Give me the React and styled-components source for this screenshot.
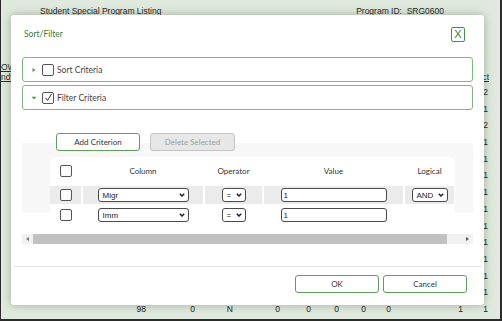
import React from 'react';
import styled, { createGlobalStyle } from 'styled-components';

const Global = createGlobalStyle`
  html, body { margin: 0; padding: 0; background: #fff; }
  body { font-family: Lato, "Liberation Sans", sans-serif; }
`;

const Screen = styled.div`
  position: relative;
  width: 502px;
  height: 321px;
  box-sizing: border-box;
  background: #dfe9dd;
  border-left: 1px solid #2b2b2b;
  border-right: 2px solid #2b2b2b;
  border-bottom: 2px solid #2b2b2b;
  overflow: hidden;
  font-family: "Liberation Sans", Arial, sans-serif;
  color: #2a2a2a;
`;

/* ---------- background page ---------- */
const PageHeader = styled.div`
  height: 15px;
  display: flex;
  justify-content: space-between;
  align-items: flex-start;
  padding: 6px 56px 0 39px;
  box-sizing: border-box;
  font-size: 8.5px;
  white-space: pre;
  color: #1f1f1f;
`;

const cols = '14px 135px 49px 38px 47px 31px 28px 27px 25px 72px 25px';

const BgHead = styled.div`
  display: grid;
  grid-template-columns: ${cols};
  height: 69px;
  align-items: end;
  font-size: 8.5px;
  padding-bottom: 2px;
  box-sizing: border-box;
`;

const BgGrid = styled.div`
  display: grid;
  grid-template-columns: ${cols};
  grid-auto-rows: 16.7px;
  font-size: 8.5px;
`;

const HeadCell = styled.div`
  grid-column: ${p => p.$col};
  text-align: right;
  padding-right: 3px;
  line-height: 10px;
  text-decoration: underline;
  overflow: hidden;
  white-space: pre;
`;

const BgCell = styled.div`
  text-align: right;
  padding-right: 4px;
  line-height: 16.7px;
  white-space: nowrap;
  color: #222;
`;

/* ---------- modal ---------- */
const Modal = styled.div`
  position: absolute;
  left: 10px;
  top: 15px;
  width: 473px;
  height: 290px;
  background: #fff;
  border-radius: 3px;
  box-shadow: 0 0 9px rgba(40, 60, 40, 0.35);
  display: flex;
  flex-direction: column;
  font-family: Lato, "Liberation Sans", sans-serif;
`;

const ModalHeader = styled.div`
  height: 38px;
  display: flex;
  align-items: center;
  justify-content: space-between;
  padding: 0 19px 0 13px;
`;

const Title = styled.div`
  font-size: 8.5px;
  color: #3a7a3a;
`;

const CloseButton = styled.button`
  width: 14px;
  height: 15px;
  padding: 0;
  border: 1px solid #4b8b4b;
  border-radius: 2px;
  background: #fff;
  color: #3a7a3a;
  font-family: "Liberation Sans", Arial, sans-serif;
  font-size: 11px;
  line-height: 13px;
  display: flex;
  align-items: center;
  justify-content: center;
`;

const Panels = styled.div`
  display: flex;
  flex-direction: column;
  gap: 3px;
  margin: 4px 11px 0;
`;

const Panel = styled.div`
  height: 25px;
  box-sizing: border-box;
  border: 1px solid #86b386;
  border-radius: 3px;
  display: flex;
  align-items: center;
  padding-left: 8px;
`;

const Arrow = styled.svg`
  width: 6px;
  height: 6px;
  margin-right: 5px;
`;

const Box = styled.span`
  width: 12px;
  height: 12px;
  box-sizing: border-box;
  border: 1.2px solid #555;
  border-radius: 2px;
  background: #fff;
  display: inline-flex;
  align-items: center;
  justify-content: center;
  flex-shrink: 0;
`;

const PanelLabel = styled.span`
  margin-left: 3px;
  font-size: 8.5px;
  color: #444;
`;

const Toolbar = styled.div`
  position: relative;
  z-index: 1;
  display: flex;
  gap: 10px;
  margin: 23px 0 0 45px;
`;

const ActionButton = styled.button`
  width: ${p => p.$w}px;
  height: 18px;
  box-sizing: border-box;
  border-radius: 3px;
  border: 1px solid ${p => (p.$disabled ? '#c4c4c4' : '#5f9d5f')};
  background: ${p => (p.$disabled ? '#e7e7e7' : '#fff')};
  color: ${p => (p.$disabled ? '#a0a0a0' : '#333')};
  font-family: Lato, "Liberation Sans", sans-serif;
  font-size: 8px;
  padding: 0;
`;

const GridWrap = styled.div`
  margin: -8px 11px 0;
  height: 70px;
  background: #f7f7f7;
  padding: 14px 0 0 28px;
  box-sizing: border-box;
`;

const TableCard = styled.div`
  width: 405px;
  background: #fff;
  border-radius: 6px 6px 0 0;
  display: grid;
  grid-template-columns: 31px 120px 57px 139px 49px;
  grid-template-rows: 27px 18px 18px;
  gap: 2px;
`;

const Cell = styled.div`
  background: ${p => (p.$shaded ? '#ebebeb' : 'transparent')};
  display: flex;
  align-items: center;
  justify-content: center;
  font-size: 8px;
  color: #333;
`;

const Select = styled.div`
  width: ${p => p.$w}px;
  height: 14px;
  box-sizing: border-box;
  border: 1px solid #4a4a4a;
  border-radius: 3px;
  background: #fff;
  display: flex;
  align-items: center;
  justify-content: space-between;
  padding: 0 3px 0 4px;
  font-family: "Liberation Sans", Arial, sans-serif;
  font-size: 8px;
  color: #222;
`;

const Input = styled.div`
  width: ${p => p.$w}px;
  height: 14px;
  box-sizing: border-box;
  border: 1px solid #4a4a4a;
  border-radius: 3px;
  background: #fff;
  display: flex;
  align-items: center;
  padding-left: 2px;
  font-family: "Liberation Sans", Arial, sans-serif;
  font-size: 8px;
  color: #222;
`;

const Scrollbar = styled.div`
  margin: 21px 11px 0;
  height: 10px;
  background: #f1f1f1;
  display: flex;
  align-items: stretch;
`;

const ScrollButton = styled.div`
  width: 11px;
  display: flex;
  align-items: center;
  justify-content: center;
`;

const Thumb = styled.div`
  width: 414px;
  background: #c1c1c1;
`;

const Track = styled.div`
  flex: 1;
`;

const Divider = styled.div`
  margin: 22px 2px 0;
  height: 1px;
  background: #e1e5ea;
`;

const Footer = styled.div`
  display: flex;
  justify-content: flex-end;
  gap: 4px;
  padding: 8px 17px 0 0;
`;

const Chevron = () => (
  <svg width="6" height="4" viewBox="0 0 6 4">
    <polyline points="0.8,0.8 3,3 5.2,0.8" fill="none" stroke="#222" strokeWidth="1.5" />
  </svg>
);

const Check = () => (
  <svg width="9" height="9" viewBox="0 0 9 9">
    <polyline points="1.5,4.8 3.6,7.4 7.6,0.8" fill="none" stroke="#333" strokeWidth="1" />
  </svg>
);

const rightCol = ['2', '1', '2', '1', '1', '1', '1', '1', '1', '1', '1', '1', '1'];

export default function App() {
  // rows hidden behind the dialog only show their last column
  const rows = rightCol.map(v => ['', '', '', '', '', '', '', '', '', '', v]);
  rows.push(['', '98', '0', 'N', '0', '0', '0', '0', '0', '1', '1']);

  return (
    <>
      <Global />
      <Screen>
        <PageHeader>
          <span>Student Special Program Listing</span>
          <span>Program ID:  SRG0600</span>
        </PageHeader>
        <BgHead>
          <HeadCell $col={1}>{'OW\nndv'}</HeadCell>
          <HeadCell $col={11}>ct</HeadCell>
        </BgHead>
        <BgGrid>
          {rows.map((r, i) => r.map((c, j) => <BgCell key={`${i}-${j}`}>{c}</BgCell>))}
        </BgGrid>

        <Modal>
          <ModalHeader>
            <Title>Sort/Filter</Title>
            <CloseButton>X</CloseButton>
          </ModalHeader>
          <Panels>
            <Panel>
              <Arrow viewBox="0 0 6 6">
                <polygon points="1.5,1 4.5,3 1.5,5" fill="#4c9a4c" />
              </Arrow>
              <Box />
              <PanelLabel>Sort Criteria</PanelLabel>
            </Panel>
            <Panel>
              <Arrow viewBox="0 0 6 6">
                <polygon points="0.5,1.8 5.5,1.8 3,4.5" fill="#4c9a4c" />
              </Arrow>
              <Box><Check /></Box>
              <PanelLabel>Filter Criteria</PanelLabel>
            </Panel>
          </Panels>

          <Toolbar>
            <ActionButton $w={84}>Add Criterion</ActionButton>
            <ActionButton $w={85} $disabled>Delete Selected</ActionButton>
          </Toolbar>

          <GridWrap>
            <TableCard>
              <Cell><Box /></Cell>
              <Cell>Column</Cell>
              <Cell>Operator</Cell>
              <Cell>Value</Cell>
              <Cell>Logical</Cell>

              <Cell $shaded><Box /></Cell>
              <Cell $shaded><Select $w={91}>Migr<Chevron /></Select></Cell>
              <Cell $shaded><Select $w={24}>=<Chevron /></Select></Cell>
              <Cell $shaded><Input $w={106}>1</Input></Cell>
              <Cell $shaded><Select $w={36}>AND<Chevron /></Select></Cell>

              <Cell><Box /></Cell>
              <Cell><Select $w={91}>Imm<Chevron /></Select></Cell>
              <Cell><Select $w={24}>=<Chevron /></Select></Cell>
              <Cell><Input $w={106}>1</Input></Cell>
              <Cell />
            </TableCard>
          </GridWrap>

          <Scrollbar>
            <ScrollButton>
              <svg width="3" height="4" viewBox="0 0 3 4"><polygon points="3,0 0,2 3,4" fill="#777" /></svg>
            </ScrollButton>
            <Thumb />
            <Track />
            <ScrollButton>
              <svg width="3" height="4" viewBox="0 0 3 4"><polygon points="0,0 3,2 0,4" fill="#555" /></svg>
            </ScrollButton>
          </Scrollbar>

          <Divider />

          <Footer>
            <ActionButton $w={84}>OK</ActionButton>
            <ActionButton $w={84}>Cancel</ActionButton>
          </Footer>
        </Modal>
      </Screen>
    </>
  );
}
